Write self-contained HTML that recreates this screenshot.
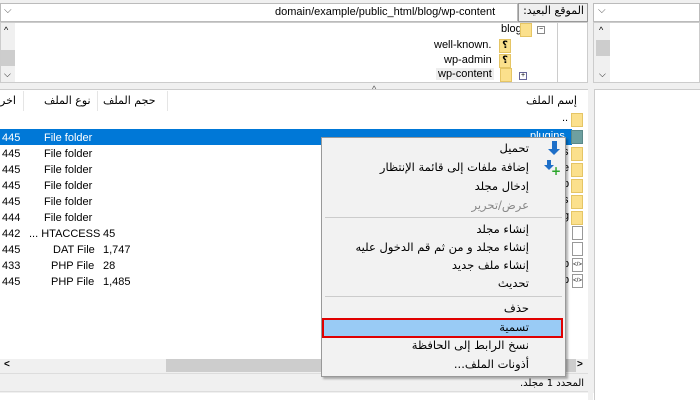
<!DOCTYPE html>
<html><head><meta charset="utf-8"><style>
*{margin:0;padding:0;box-sizing:border-box}
body{width:700px;height:400px;background:#f0f0f0;position:relative;overflow:hidden;font-family:"Liberation Sans","DejaVu Sans",sans-serif;font-size:11px;color:#000}
.a{position:absolute}
.w{background:#fff}
.t{white-space:nowrap}
.fold{position:absolute;width:12px;height:14px;background:#fbe08c;border:1px solid #e5c565}
.doc{position:absolute;width:11px;height:14px;background:#fff;border:1px solid #999}
.mi{position:absolute;right:36px;font-size:11.5px;white-space:nowrap;direction:rtl}
</style></head><body>
<div class="a w" style="left:0;top:3px;width:518px;height:19px;border:1px solid #bbb"></div>
<div class="a t" style="left:4px;top:5px;font-size:10px;color:#555">⌵</div>
<div class="a t" style="left:275px;top:6px;font-size:11px">domain/example/public_html/blog/wp-content</div>
<div class="a" style="left:518px;top:3px;width:70px;height:19px;border:1px solid #999;background:#f0f0f0"></div>
<div class="a t" style="left:522px;top:4px;direction:rtl;width:62px;text-align:right;font-family:'DejaVu Sans',sans-serif;font-size:11px">الموقع البعيد:</div>
<div class="a w" style="left:0;top:22px;width:588px;height:61px;border:1px solid #ccc"></div>
<div class="a" style="left:1px;top:23px;width:14px;height:59px;background:#f0f0f0"></div>
<div class="a" style="left:1px;top:50px;width:14px;height:16px;background:#cdcdcd"></div>
<div class="a t" style="left:4px;top:25px;font-size:9px">^</div>
<div class="a t" style="left:4px;top:69px;font-size:9px">⌵</div>
<div class="a" style="left:557px;top:23px;width:1px;height:60px;background:#ccc"></div>
<div class="a t" style="left:501px;top:23px">blog</div>
<div class="fold" style="left:520px;top:23px"></div>
<div class="a" style="left:537px;top:26px;width:8px;height:8px;border:1px solid #888;font-size:7px;line-height:6px;text-align:center">−</div>
<div class="a t" style="left:434px;top:39px">well-known.</div>
<div class="fold" style="left:499px;top:39px;font-size:10px;line-height:12px;text-align:center;font-weight:bold">؟</div>
<div class="a t" style="left:444px;top:54px">wp-admin</div>
<div class="fold" style="left:499px;top:54px;font-size:10px;line-height:12px;text-align:center;font-weight:bold">؟</div>
<div class="a t" style="left:436px;top:68px;background:#eee;padding:0 2px">wp-content</div>
<div class="fold" style="left:500px;top:68px"></div>
<div class="a" style="left:519px;top:72px;width:8px;height:8px;border:1px solid #669;font-size:7px;line-height:6px;text-align:center">+</div>
<div class="a w" style="left:0;top:89px;width:588px;height:270px;border-top:1px solid #ccc"></div>
<div class="a t" style="left:372px;top:84px;font-size:9px;color:#555">^</div>
<div class="a" style="left:23px;top:91px;width:1px;height:20px;background:#e5e5e5"></div>
<div class="a" style="left:97px;top:91px;width:1px;height:20px;background:#e5e5e5"></div>
<div class="a" style="left:167px;top:91px;width:1px;height:20px;background:#e5e5e5"></div>
<div class="a t" style="left:0;top:94px;font-family:'DejaVu Sans',sans-serif;font-size:11px">اخر</div>
<div class="a t" style="left:44px;top:94px;font-family:'DejaVu Sans',sans-serif;font-size:11px">نوع الملف</div>
<div class="a t" style="left:103px;top:94px;font-family:'DejaVu Sans',sans-serif;font-size:11px">حجم الملف</div>
<div class="a t" style="left:526px;top:94px;font-family:'DejaVu Sans',sans-serif;font-size:11px">إسم الملف</div>
<div class="fold" style="left:571px;top:113px"></div>
<div class="a t" style="left:562px;top:112px">..</div>
<div class="a" style="left:0;top:129px;width:572px;height:16px;background:#0078d7"></div>
<div class="fold" style="left:571px;top:130px;background:#6ea0a0;border-color:#5a8888"></div>
<div class="a t" style="left:530px;top:130px;color:#fff">plugins</div>
<div class="fold" style="left:571px;top:147px"></div><div class="a t" style="left:563px;top:146px">s</div>
<div class="fold" style="left:571px;top:163px"></div><div class="a t" style="left:563px;top:162px">e</div>
<div class="fold" style="left:571px;top:179px"></div><div class="a t" style="left:563px;top:178px">p</div>
<div class="fold" style="left:571px;top:195px"></div><div class="a t" style="left:563px;top:194px">s</div>
<div class="fold" style="left:571px;top:211px"></div><div class="a t" style="left:563px;top:210px">g</div>
<div class="doc" style="left:572px;top:226px"></div><div class="a t" style="left:563px;top:226px">:</div>
<div class="doc" style="left:572px;top:242px"></div><div class="a t" style="left:563px;top:242px">:</div>
<div class="doc" style="left:572px;top:258px;font-size:6px;line-height:12px;text-align:center">&lt;/&gt;</div><div class="a t" style="left:563px;top:258px">p</div>
<div class="doc" style="left:572px;top:274px;font-size:6px;line-height:12px;text-align:center">&lt;/&gt;</div><div class="a t" style="left:563px;top:274px">p</div>
<div class="a" style="left:0;top:130px;line-height:16px;font-size:11px">
<div style="position:absolute;left:2px;top:0;color:#fff">445</div><div style="position:absolute;left:44px;top:0;color:#fff" class="t">File folder</div>
<div style="position:absolute;left:2px;top:16px">445</div><div style="position:absolute;left:44px;top:16px" class="t">File folder</div>
<div style="position:absolute;left:2px;top:32px">445</div><div style="position:absolute;left:44px;top:32px" class="t">File folder</div>
<div style="position:absolute;left:2px;top:48px">445</div><div style="position:absolute;left:44px;top:48px" class="t">File folder</div>
<div style="position:absolute;left:2px;top:64px">445</div><div style="position:absolute;left:44px;top:64px" class="t">File folder</div>
<div style="position:absolute;left:2px;top:80px">444</div><div style="position:absolute;left:44px;top:80px" class="t">File folder</div>
<div style="position:absolute;left:2px;top:96px">442</div><div style="position:absolute;left:29px;top:96px" class="t">... HTACCESS</div><div style="position:absolute;left:103px;top:96px">45</div>
<div style="position:absolute;left:2px;top:112px">445</div><div style="position:absolute;left:53px;top:112px" class="t">DAT File</div><div style="position:absolute;left:103px;top:112px">1,747</div>
<div style="position:absolute;left:2px;top:128px">433</div><div style="position:absolute;left:51px;top:128px" class="t">PHP File</div><div style="position:absolute;left:103px;top:128px">28</div>
<div style="position:absolute;left:2px;top:144px">445</div><div style="position:absolute;left:51px;top:144px" class="t">PHP File</div><div style="position:absolute;left:103px;top:144px">1,485</div>
</div>
<div class="a" style="left:0;top:359px;width:588px;height:13px;background:#f0f0f0"></div>
<div class="a" style="left:166px;top:359px;width:410px;height:13px;background:#cdcdcd"></div>
<div class="a t" style="left:4px;top:359px;font-size:10px;font-weight:bold">&lt;</div>
<div class="a t" style="left:577px;top:359px;font-size:10px;font-weight:bold">&gt;</div>
<div class="a" style="left:0;top:373px;width:588px;height:19px;background:#f0f0f0;border-top:1px solid #ddd;border-bottom:1px solid #ddd"></div>
<div class="a t" style="left:520px;top:378px;direction:rtl;font-family:'DejaVu Sans',sans-serif;font-size:10px">المحدد 1 مجلد.</div>
<div class="a w" style="left:0;top:393px;width:700px;height:7px"></div>
<div class="a" style="left:588px;top:0;width:5px;height:400px;background:#f0f0f0"></div>
<div class="a w" style="left:593px;top:3px;width:107px;height:19px;border:1px solid #bbb"></div>
<div class="a t" style="left:598px;top:5px;font-size:10px;color:#555">⌵</div>
<div class="a" style="left:593px;top:22px;width:107px;height:61px;background:#fff;border:1px solid #ccc"></div>
<div class="a" style="left:594px;top:23px;width:16px;height:59px;background:#f0f0f0"></div>
<div class="a" style="left:596px;top:40px;width:14px;height:16px;background:#cdcdcd"></div>
<div class="a t" style="left:599px;top:25px;font-size:9px">^</div>
<div class="a t" style="left:599px;top:69px;font-size:9px">⌵</div>
<div class="a w" style="left:594px;top:89px;width:106px;height:311px;border-left:1px solid #ccc;border-top:1px solid #ccc"></div>
<div class="a" style="left:321px;top:137px;width:245px;height:240px;background:#f2f2f2;border:1px solid #999;box-shadow:2px 2px 2px rgba(0,0,0,.3);font-family:'DejaVu Sans',sans-serif">
<div class="a" style="left:230px;top:3px;width:5px;height:10px;background:#1e6fc8"></div>
<div class="a" style="left:226px;top:11px;width:0;height:0;border-left:6px solid transparent;border-right:6px solid transparent;border-top:6px solid #1e6fc8"></div>
<div class="a" style="left:225px;top:22px;width:4px;height:6px;background:#1e6fc8"></div>
<div class="a" style="left:222px;top:27px;border-left:5px solid transparent;border-right:5px solid transparent;border-top:5px solid #1e6fc8"></div>
<div class="a t" style="left:229px;top:26px;color:#2aa52a;font-weight:bold;font-size:12px">+</div>
<div class="mi" style="top:3px">تحميل</div>
<div class="mi" style="top:22px">إضافة ملفات إلى قائمة الإنتظار</div>
<div class="mi" style="top:41px">إدخال مجلد</div>
<div class="mi" style="top:60px;color:#888">عرض/تحرير</div>
<div class="a" style="left:3px;top:79px;width:237px;height:1px;background:#ccc"></div>
<div class="mi" style="top:84px">إنشاء مجلد</div>
<div class="mi" style="top:102px">إنشاء مجلد و من ثم قم الدخول عليه</div>
<div class="mi" style="top:120px">إنشاء ملف جديد</div>
<div class="mi" style="top:138px">تحديث</div>
<div class="a" style="left:3px;top:158px;width:237px;height:1px;background:#ccc"></div>
<div class="mi" style="top:163px">حذف</div>
<div class="a" style="left:0;top:180px;width:241px;height:20px;background:#99cbf5;border:2px solid #e00000"></div>
<div class="mi" style="top:182px">تسمية</div>
<div class="mi" style="top:200px">نسخ الرابط إلى الحافظة</div>
<div class="mi" style="top:219px">أذونات الملف...</div>
</div>
</body></html>
